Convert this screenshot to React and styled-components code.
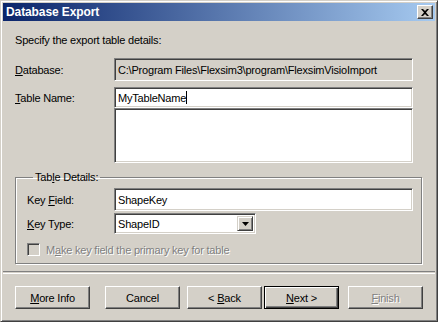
import React from "react";
import styled, { createGlobalStyle } from "styled-components";

const Global = createGlobalStyle`
  html, body { margin: 0; padding: 0; background: #d4d0c8; }
  body {
    font-family: "Liberation Sans", Arial, sans-serif;
    font-size: 11px;
    letter-spacing: -0.2px;
    color: #000;
  }
`;

const Window = styled.div`
  box-sizing: border-box;
  width: 438px;
  height: 322px;
  background: #d4d0c8;
  border: 1px solid;
  border-color: #d4d0c8 #404040 #404040 #d4d0c8;
  box-shadow: inset 1px 1px #fff, inset -1px -1px #808080;
  padding: 2px;
  display: flex;
  flex-direction: column;
`;

const TitleBar = styled.div`
  height: 18px;
  display: flex;
  align-items: center;
  justify-content: space-between;
  padding: 0 2px 0 3px;
  background: linear-gradient(to right, #0a246a, #a6caf0);
  color: #fff;
  font-weight: bold;
  font-size: 12px;
  letter-spacing: -0.1px;
`;

const CloseBtn = styled.div`
  box-sizing: border-box;
  width: 16px;
  height: 14px;
  background: #d4d0c8;
  border: 1px solid;
  border-color: #fff #404040 #404040 #fff;
  box-shadow: inset -1px -1px #808080;
  display: flex;
  align-items: center;
  justify-content: center;
`;

const Body = styled.div`
  flex: 1;
  display: flex;
  flex-direction: column;
  padding: 13px 12px 0 12px;
`;

const Intro = styled.div`
  height: 13px;
  line-height: 13px;
`;

const FormGrid = styled.div`
  display: grid;
  grid-template-columns: 99px 299px;
  align-items: center;
  row-gap: ${(p) => p.$gap || 6}px;
  margin-top: ${(p) => p.$top || 0}px;
`;

const Label = styled.div`
  color: ${(p) => (p.$disabled ? "#808080" : "#000")};
`;

const Field = styled.div`
  box-sizing: border-box;
  height: ${(p) => p.$h || 21}px;
  width: ${(p) => p.$w || "auto"};
  background: ${(p) => (p.$disabled ? "#d4d0c8" : "#fff")};
  border: 1px solid;
  border-color: #808080 #fff #fff #808080;
  box-shadow: inset 1px 1px #404040, inset -1px -1px #d4d0c8;
  padding: 0 3px;
  display: flex;
  align-items: ${(p) => (p.$multi ? "flex-start" : "center")};
  white-space: nowrap;
  overflow: hidden;
  position: relative;
`;

const Caret = styled.span`
  display: inline-block;
  width: 1px;
  height: 13px;
  background: #000;
  vertical-align: middle;
`;

const ComboBtn = styled.div`
  position: absolute;
  right: 2px;
  top: 2px;
  bottom: 2px;
  width: 16px;
  box-sizing: border-box;
  background: #d4d0c8;
  border: 1px solid;
  border-color: #d4d0c8 #404040 #404040 #d4d0c8;
  box-shadow: inset 1px 1px #fff, inset -1px -1px #808080;
  display: flex;
  align-items: center;
  justify-content: center;
`;

const Group = styled.fieldset`
  margin: 8px 0 0 0;
  padding: 5px 8px 0 11px;
  height: 93px;
  box-sizing: border-box;
  width: 407px;
  border: 1px solid #808080;
  box-shadow: 1px 1px #fff, inset 1px 1px #fff;
  legend {
    padding: 0 2px;
    margin-left: 6px;
    font-size: 11px;
  }
`;

const GroupGrid = styled.div`
  display: grid;
  grid-template-columns: 87px 299px;
  align-items: center;
  row-gap: 2px;
`;

const CheckRow = styled.div`
  display: flex;
  align-items: center;
  gap: 6px;
  margin-top: 9px;
  color: #808080;
  text-shadow: 1px 1px #fff;
`;

const CheckBox = styled.div`
  box-sizing: border-box;
  width: 13px;
  height: 13px;
  border: 1px solid;
  border-color: #808080 #fff #fff #808080;
  box-shadow: inset 1px 1px #404040, inset -1px -1px #d4d0c8;
  background: #d4d0c8;
`;

const Separator = styled.div`
  margin: 7px -12px 0 -12px;
  height: 1px;
  border-top: 1px solid #808080;
  border-bottom: 1px solid #fff;
`;

const ButtonRow = styled.div`
  display: flex;
  margin-top: 12px;
`;

const Button = styled.div`
  box-sizing: border-box;
  width: 75px;
  height: 23px;
  margin-left: ${(p) => p.$ml || 0}px;
  display: flex;
  align-items: center;
  justify-content: center;
  background: #d4d0c8;
  color: ${(p) => (p.$disabled ? "#808080" : "#000")};
  text-shadow: ${(p) => (p.$disabled ? "1px 1px #fff" : "none")};
  border: 1px solid;
  border-color: ${(p) =>
    p.$default ? "#000" : "#fff #404040 #404040 #fff"};
  box-shadow: ${(p) =>
    p.$default
      ? "inset 1px 1px #fff, inset -1px -1px #404040, inset -2px -2px #808080"
      : "inset -1px -1px #808080"};
`;

export default function App() {
  return (
    <>
      <Global />
      <Window>
        <TitleBar>
          <span>Database Export</span>
          <CloseBtn>
            <svg width="8" height="7" viewBox="0 0 8 7">
              <path d="M0 0h2l2 2 2-2h2L5 3.5 8 7H6L4 5 2 7H0l3-3.5z" fill="#000" />
            </svg>
          </CloseBtn>
        </TitleBar>
        <Body>
          <Intro>Specify the export table details:</Intro>
          <FormGrid $top={11} $gap={6}>
            <Label><u>D</u>atabase:</Label>
            <Field $disabled $h={23}>C:\Program Files\Flexsim3\program\FlexsimVisioImport</Field>
            <Label><u>T</u>able Name:</Label>
            <Field>MyTableName<Caret /></Field>
          </FormGrid>
          <FormGrid $gap={0}>
            <span />
            <Field $multi $h={55} />
          </FormGrid>
          <Group>
            <legend>Tab<u>l</u>e Details:</legend>
            <GroupGrid>
              <Label>Key <u>F</u>ield:</Label>
              <Field $h={23}>ShapeKey</Field>
              <Label><u>K</u>ey Type:</Label>
              <Field $w="142px">
                ShapeID
                <ComboBtn>
                  <svg width="7" height="4" viewBox="0 0 7 4">
                    <path d="M0 0h7L3.5 4z" fill="#000" />
                  </svg>
                </ComboBtn>
              </Field>
            </GroupGrid>
            <CheckRow>
              <CheckBox />
              <span>M<u>a</u>ke key field the primary key for table</span>
            </CheckRow>
          </Group>
          <Separator />
          <ButtonRow>
            <Button><span><u>M</u>ore Info</span></Button>
            <Button $ml={15}>Cancel</Button>
            <Button $ml={7}><span>&lt; <u>B</u>ack</span></Button>
            <Button $ml={2} $default><span><u>N</u>ext &gt;</span></Button>
            <Button $ml={9} $disabled><span><u>F</u>inish</span></Button>
          </ButtonRow>
        </Body>
      </Window>
    </>
  );
}
